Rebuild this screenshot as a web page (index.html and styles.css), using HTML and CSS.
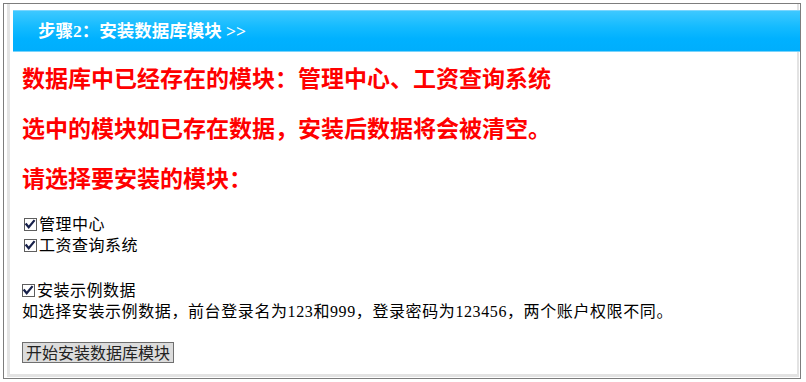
FILE: index.html
```html
<!DOCTYPE html>
<html lang="zh-CN">
<head>
<meta charset="utf-8">
<title>安装数据库模块</title>
<link rel="stylesheet" href="styles.css">
</head>
<body>
<div class="frame">
  <div class="panel">
    <div class="step-head">步骤2：安装数据库模块 &gt;&gt;</div>
    <div class="content">
      <p class="warn first">数据库中已经存在的模块：管理中心、工资查询系统</p>
      <p class="warn">选中的模块如已存在数据，安装后数据将会被清空。</p>
      <p class="warn">请选择要安装的模块：</p>
      <div class="modules">
        <label class="opt mod"><span class="cb"><svg viewBox="0 0 13 13" width="13" height="13"><path d="M2.5 6.3 L5.1 9.5 L10.7 2.7" fill="none" stroke="#17204a" stroke-width="2.4" stroke-linecap="square"/></svg></span>管理中心</label>
        <label class="opt mod"><span class="cb"><svg viewBox="0 0 13 13" width="13" height="13"><path d="M2.5 6.3 L5.1 9.5 L10.7 2.7" fill="none" stroke="#17204a" stroke-width="2.4" stroke-linecap="square"/></svg></span>工资查询系统</label>
      </div>
      <div class="sample">
        <label class="opt"><span class="cb"><svg viewBox="0 0 13 13" width="13" height="13"><path d="M2.5 6.3 L5.1 9.5 L10.7 2.7" fill="none" stroke="#17204a" stroke-width="2.4" stroke-linecap="square"/></svg></span>安装示例数据</label>
        <div class="note">如选择安装示例数据，前台登录名为123和999，登录密码为123456，两个账户权限不同。</div>
      </div>
      <button class="btn" type="button">开始安装数据库模块</button>
    </div>
  </div>
</div>
</body>
</html>
```
FILE: styles.css
```css
html, body {
  margin: 0;
  padding: 0;
  background: #ffffff;
}
body {
  font-family: "Liberation Serif", "Noto Sans CJK SC", serif;
  font-size: 16px;
  color: #000;
}
.frame {
  margin: 3px 0 0 3px;
  width: 796px;
  height: 374px;
  border: 1px solid #7d7d7d;
  display: flex;
  flex-direction: column;
}
.panel {
  flex: 1;
  margin: 0 1px 1px 3px;
  border-left: 3px solid #e3e3e3;
  border-right: 2px solid #e3e3e3;
  border-bottom: 3px solid #e3e3e3;
  padding-top: 6px;
}
.step-head {
  margin: 0 -3px 0 3px;
  height: 40px;
  line-height: 40px;
  border-top: 1px solid #7ad6ff;
  border-bottom: 1px solid #7ad3fa;
  background: linear-gradient(#3ec8ff 0%, #14bbff 40%, #00b1ff 70%, #00aefc 100%);
  color: #ffffff;
  font-weight: bold;
  font-size: 17.5px;
  padding-left: 25px;
}
.content {
  padding-left: 12px;
}
.warn {
  margin: 20px 0 0 0;
  height: 30px;
  line-height: 30px;
  color: #ff0000;
  font-weight: bold;
  font-size: 23px;
  font-family: "Noto Sans CJK SC", sans-serif;
  white-space: nowrap;
}
.warn.first {
  margin-top: 10px;
}
.modules {
  margin-top: 22px;
  padding-left: 2px;
}
.opt {
  display: flex;
  align-items: center;
  height: 21px;
  line-height: 21px;
  letter-spacing: 0.5px;
}
.cb {
  display: inline-flex;
  width: 11px;
  height: 11px;
  border: 1px solid #5e5e5e;
  background: #fff;
  margin-right: 2px;
  overflow: visible;
}
.cb svg {
  margin: -1px 0 0 -1px;
  display: block;
}
.sample {
  margin-top: 24px;
}
.note {
  height: 21px;
  line-height: 21px;
  white-space: nowrap;
  letter-spacing: 0.6px;
}
.btn {
  display: block;
  margin: 20px 0 0 0;
  padding: 0 3px;
  height: 21px;
  line-height: 19px;
  border: 1px solid #6f6f6f;
  background: #dcdcdc;
  color: #222;
  font-family: "Noto Sans CJK SC", sans-serif;
  font-size: 16px;
  border-radius: 0;
}
```
